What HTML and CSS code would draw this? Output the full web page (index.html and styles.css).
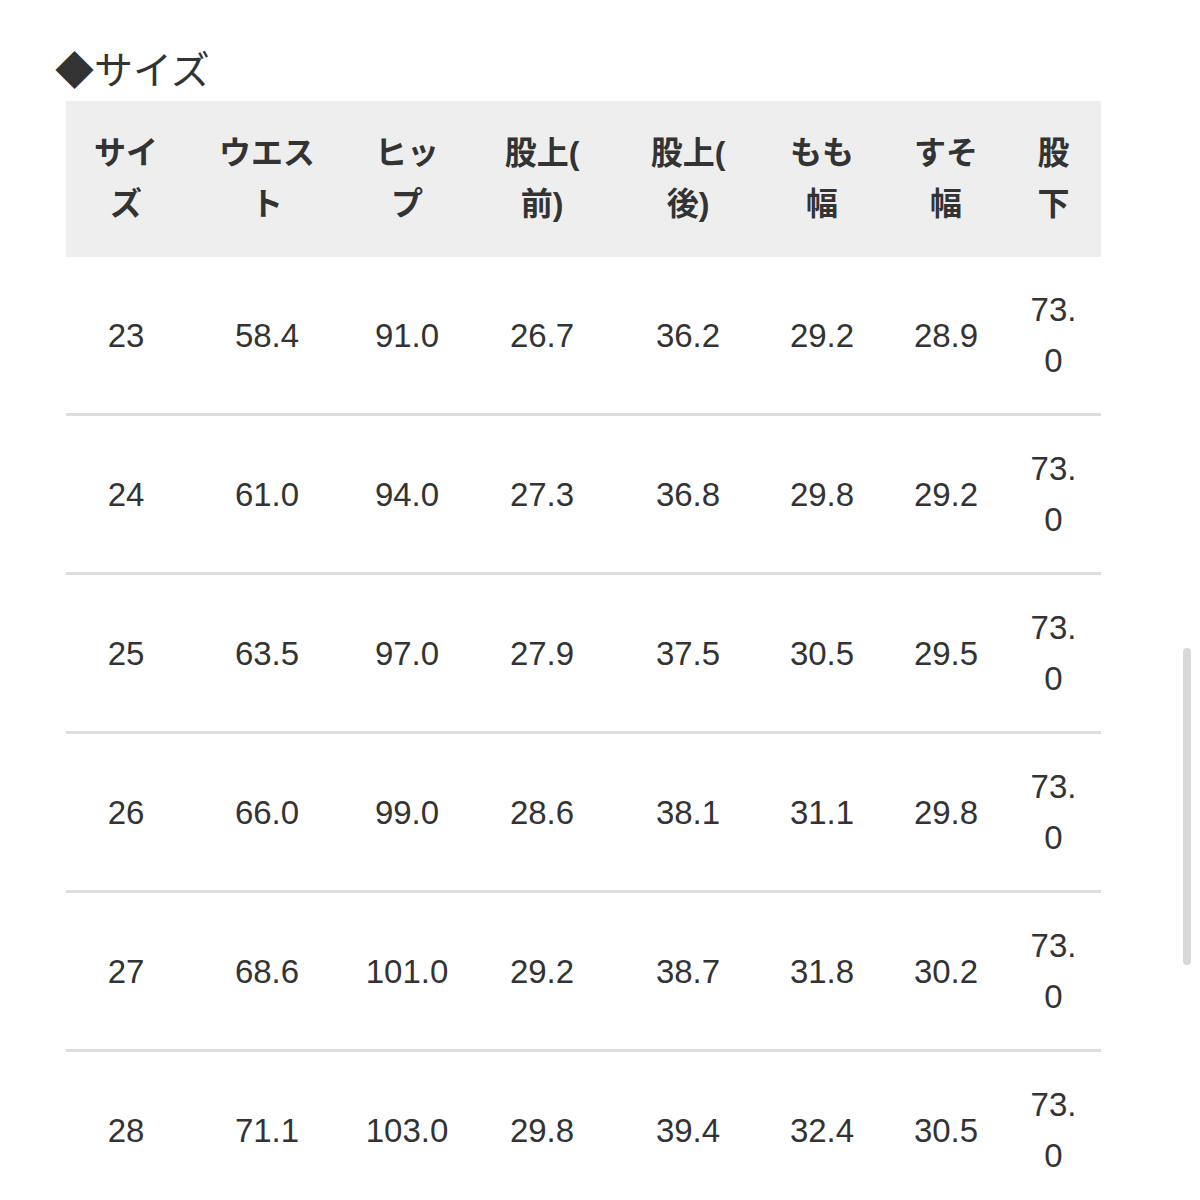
FILE: index.html
```html
<!DOCTYPE html>
<html lang="ja">
<head>
<meta charset="utf-8">
<title>サイズ</title>
<link rel="stylesheet" href="styles.css">
</head>
<body>
<div class="page">
  <h2 class="title">◆サイズ</h2>
  <table class="size-table">
    <colgroup>
      <col class="c1"><col class="c2"><col class="c3"><col class="c4"><col class="c5"><col class="c6"><col class="c7"><col class="c8">
    </colgroup>
    <thead>
      <tr>
        <th>サイズ</th><th>ウエスト</th><th>ヒップ</th><th>股上(前)</th><th>股上(後)</th><th>もも幅</th><th>すそ幅</th><th>股下</th>
      </tr>
    </thead>
    <tbody>
      <tr><td>23</td><td>58.4</td><td>91.0</td><td>26.7</td><td>36.2</td><td>29.2</td><td>28.9</td><td>73.0</td></tr>
      <tr><td>24</td><td>61.0</td><td>94.0</td><td>27.3</td><td>36.8</td><td>29.8</td><td>29.2</td><td>73.0</td></tr>
      <tr><td>25</td><td>63.5</td><td>97.0</td><td>27.9</td><td>37.5</td><td>30.5</td><td>29.5</td><td>73.0</td></tr>
      <tr><td>26</td><td>66.0</td><td>99.0</td><td>28.6</td><td>38.1</td><td>31.1</td><td>29.8</td><td>73.0</td></tr>
      <tr><td>27</td><td>68.6</td><td>101.0</td><td>29.2</td><td>38.7</td><td>31.8</td><td>30.2</td><td>73.0</td></tr>
      <tr><td>28</td><td>71.1</td><td>103.0</td><td>29.8</td><td>39.4</td><td>32.4</td><td>30.5</td><td>73.0</td></tr>
    </tbody>
  </table>
</div>
<div class="scrollbar"></div>
</body>
</html>
```

FILE: styles.css
```css
html {
  overflow: hidden;
}
body {
  margin: 0;
  background: #ffffff;
  color: #333333;
  font-family: "Liberation Sans", "Noto Sans CJK JP", sans-serif;
}
.page {
  padding: 48px 0 0 55px;
}
.title {
  margin: 0 0 15px 0;
  font-family: "Noto Sans CJK JP", sans-serif;
  font-weight: 400;
  font-size: 39px;
  line-height: 38px;
  color: #333333;
}
.size-table {
  margin-left: 11px;
  width: 1035px;
  table-layout: fixed;
  border-collapse: separate;
  border-spacing: 0;
  font-size: 32px;
  line-height: 51px;
}
.c1 { width: 120px; }
.c2 { width: 162px; }
.c3 { width: 118px; }
.c4 { width: 152px; }
.c5 { width: 140px; }
.c6 { width: 128px; }
.c7 { width: 120px; }
.c8 { width: 95px; }
.size-table th,
.size-table td {
  text-align: center;
  vertical-align: middle;
  word-break: break-all;
  line-break: anywhere;
}
.size-table th {
  background: #eeeeee;
  padding: 27px 25px;
  font-weight: 700;
  color: #333333;
}
.size-table td {
  padding: 27px 17px;
  font-size: 33px;
  font-weight: 400;
  color: #333333;
  border-bottom: 3px solid #dddddd;
}
.scrollbar {
  position: absolute;
  left: 1183px;
  top: 648px;
  width: 8px;
  height: 317px;
  border-radius: 4px;
  background: #d8d8d8;
}
```
